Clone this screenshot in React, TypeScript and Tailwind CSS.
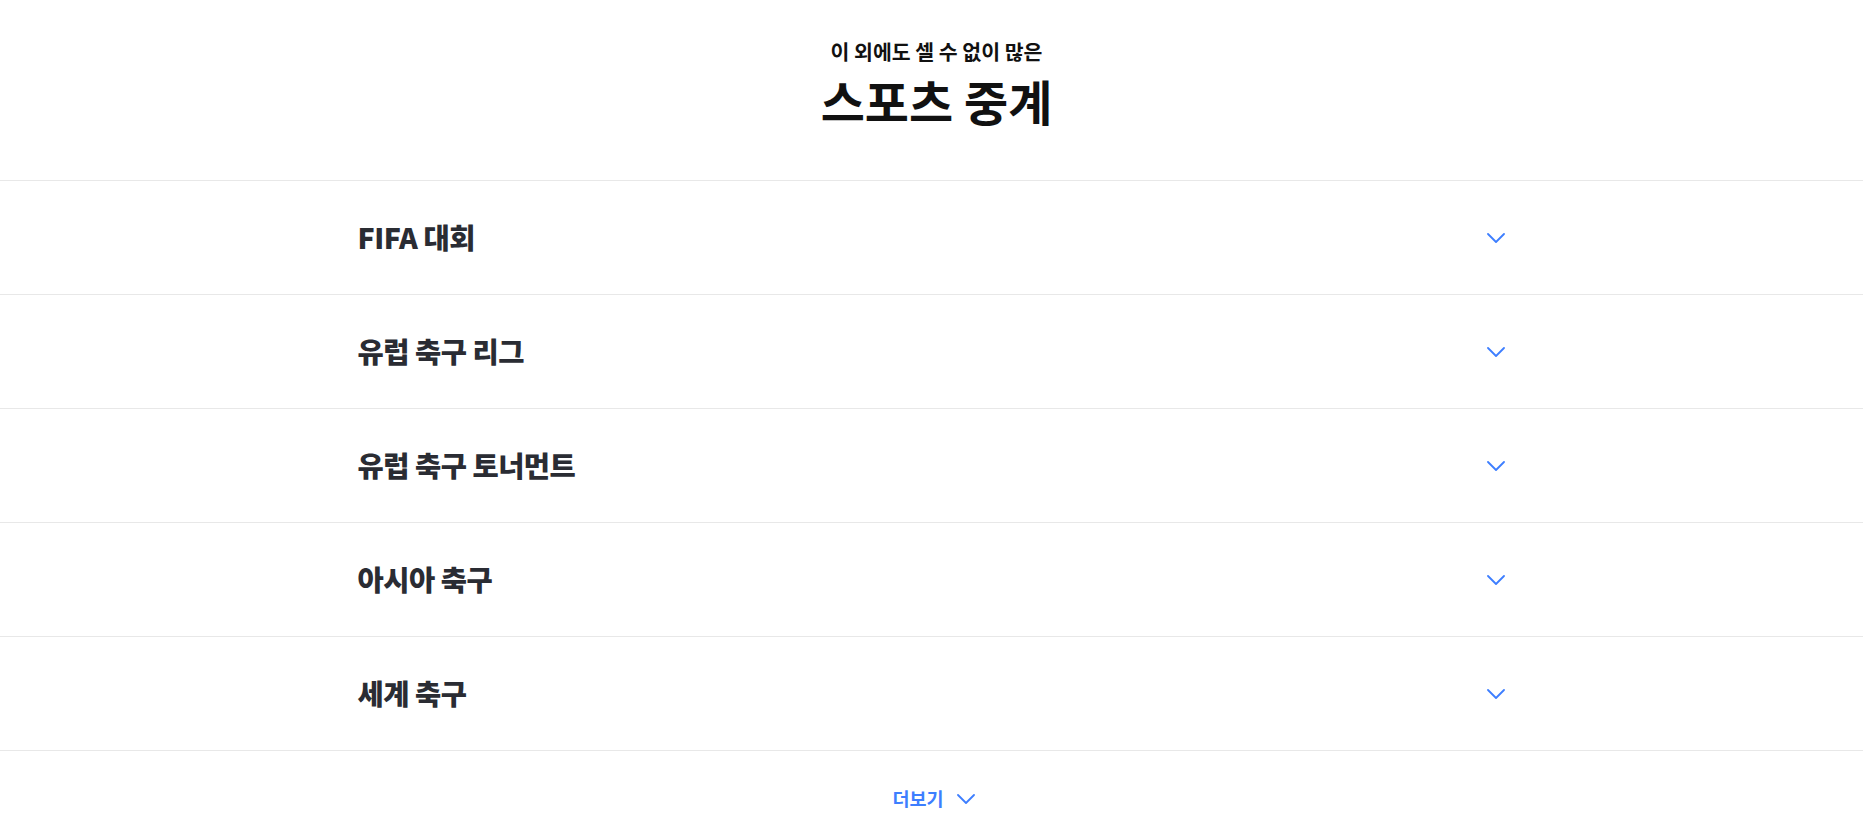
const leagues = ['FIFA 대회', '유럽 축구 리그', '유럽 축구 토너먼트', '아시아 축구', '세계 축구']

function Chevron({ className }: { className?: string }) {
  return (
    <svg className={className} width="18" height="10" viewBox="0 0 18 10" fill="none">
      <path d="M1 1l8 8 8-8" stroke="currentColor" strokeWidth="1.8" strokeLinecap="round" strokeLinejoin="round" />
    </svg>
  )
}

export default function App() {
  return (
    <section
      className="w-full bg-white text-[#2a2c33]"
      style={{ fontFamily: '"Noto Sans CJK KR", "Noto Sans", sans-serif' }}
    >
      {/* Header */}
      <div className="flex flex-col items-center pt-[37px] pb-[50px] pl-[10px]">
        <p className="text-[20.5px] leading-[28px] font-bold text-[#111]">이 외에도 셀 수 없이 많은</p>
        <h2 className="text-[48px] leading-[60px] font-bold text-[#111] mt-[5px]">스포츠 중계</h2>
      </div>

      {/* Accordion rows */}
      <ul className="border-t border-[#e8e8e8]">
        {leagues.map((name) => (
          <li key={name} className="border-b border-[#e8e8e8]">
            <button className="mx-auto flex h-[113px] w-[1148px] items-center justify-between">
              <span className="text-[28.5px] font-black tracking-[-0.5px]">{name}</span>
              <Chevron className="mr-[1px] text-[#3d7eff]" />
            </button>
          </li>
        ))}
      </ul>

      {/* More */}
      <div className="flex justify-center pt-[34px] pb-[30px] pl-[4px]">
        <button className="flex items-center gap-[13px] text-[18.5px] font-bold text-[#3d7eff]">
          더보기
          <Chevron />
        </button>
      </div>
    </section>
  )
}
